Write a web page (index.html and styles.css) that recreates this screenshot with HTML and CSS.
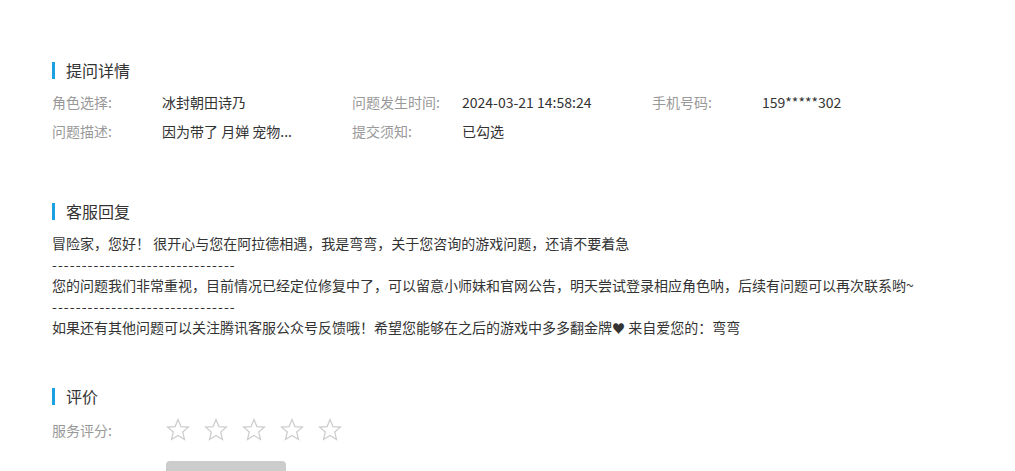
FILE: index.html
```html
<!DOCTYPE html>
<html>
<head>
    <meta charset="UTF-8">
    <title>问题详情</title>
    <link rel="stylesheet" href="styles.css">
</head>
<body>
    <div class="page">
        <!-- 提问详情 -->
        <h2 class="section-title">提问详情</h2>
        <div class="info">
            <div class="info-item"><span class="label">角色选择:</span><span class="value">冰封朝田诗乃</span></div>
            <div class="info-item"><span class="label">问题发生时间:</span><span class="value">2024-03-21 14:58:24</span></div>
            <div class="info-item"><span class="label">手机号码:</span><span class="value">159*****302</span></div>
            <div class="info-item"><span class="label">问题描述:</span><span class="value">因为带了 月婵 宠物...</span></div>
            <div class="info-item"><span class="label">提交须知:</span><span class="value">已勾选</span></div>
        </div>

        <!-- 客服回复 -->
        <h2 class="section-title reply-title">客服回复</h2>
        <div class="reply">
            <p>冒险家，您好！ 很开心与您在阿拉德相遇，我是弯弯，关于您咨询的游戏问题，还请不要着急</p>
            <p class="dashes">-------------------------------</p>
            <p>您的问题我们非常重视，目前情况已经定位修复中了，可以留意小师妹和官网公告，明天尝试登录相应角色呐，后续有问题可以再次联系哟~</p>
            <p class="dashes">-------------------------------</p>
            <p>如果还有其他问题可以关注腾讯客服公众号反馈哦！希望您能够在之后的游戏中多多翻金牌<span class="heart">♥</span> 来自爱您的：弯弯</p>
        </div>

        <!-- 评价 -->
        <h2 class="section-title rate-title">评价</h2>
        <div class="rate">
            <span class="label">服务评分:</span>
            <div class="stars">
                <svg class="star" viewBox="0 0 24 24"><polygon points="12,1.5 14.9,8.6 22.5,9.1 16.7,14 18.5,21.5 12,17.4 5.5,21.5 7.3,14 1.5,9.1 9.1,8.6"/></svg>
                <svg class="star" viewBox="0 0 24 24"><polygon points="12,1.5 14.9,8.6 22.5,9.1 16.7,14 18.5,21.5 12,17.4 5.5,21.5 7.3,14 1.5,9.1 9.1,8.6"/></svg>
                <svg class="star" viewBox="0 0 24 24"><polygon points="12,1.5 14.9,8.6 22.5,9.1 16.7,14 18.5,21.5 12,17.4 5.5,21.5 7.3,14 1.5,9.1 9.1,8.6"/></svg>
                <svg class="star" viewBox="0 0 24 24"><polygon points="12,1.5 14.9,8.6 22.5,9.1 16.7,14 18.5,21.5 12,17.4 5.5,21.5 7.3,14 1.5,9.1 9.1,8.6"/></svg>
                <svg class="star" viewBox="0 0 24 24"><polygon points="12,1.5 14.9,8.6 22.5,9.1 16.7,14 18.5,21.5 12,17.4 5.5,21.5 7.3,14 1.5,9.1 9.1,8.6"/></svg>
            </div>
        </div>
        <button class="submit" type="button"></button>
    </div>
</body>
</html>
```

FILE: styles.css
```css
body {
    margin: 0;
    background-color: #fff;
    color: #333;
    font-family: "Noto Sans CJK SC", "Noto Sans", sans-serif;
    font-size: 14px;
}
.page {
    padding: 60px 0 0 52px;
}
/* section headings with blue bar */
.section-title {
    display: flex;
    align-items: center;
    height: 20px;
    margin: 0;
    font-size: 16px;
    font-weight: normal;
    line-height: 20px;
    color: #333;
}
.section-title::before {
    content: "";
    width: 3px;
    height: 17px;
    margin-right: 11px;
    background-color: #1ba1e2;
}
.reply-title {
    margin-top: 55px;
}
.rate-title {
    margin-top: 48px;
}
/* question details */
.info {
    display: grid;
    grid-template-columns: 300px 300px 300px;
    margin-top: 8px;
}
.info-item {
    display: flex;
    height: 29px;
    line-height: 29px;
}
.label {
    width: 110px;
    flex-shrink: 0;
    color: #999;
}
.value {
    color: #333;
}
/* reply */
.reply {
    margin-top: 12px;
}
.reply p {
    margin: 0;
    line-height: 21px;
}
.dashes {
    letter-spacing: 1.07px;
}
.heart {
    font-size: 13px;
}
/* rating */
.rate {
    display: flex;
    align-items: center;
    height: 24px;
    margin-top: 12px;
}
.stars {
    display: flex;
    gap: 14px;
    padding-left: 4px;
}
.star {
    width: 24px;
    height: 24px;
    fill: none;
    stroke: #ccc;
    stroke-width: 1.2;
}
.submit {
    display: block;
    width: 120px;
    height: 36px;
    margin: 19px 0 0 114px;
    border: none;
    border-radius: 4px;
    background-color: #ccc;
}
```
